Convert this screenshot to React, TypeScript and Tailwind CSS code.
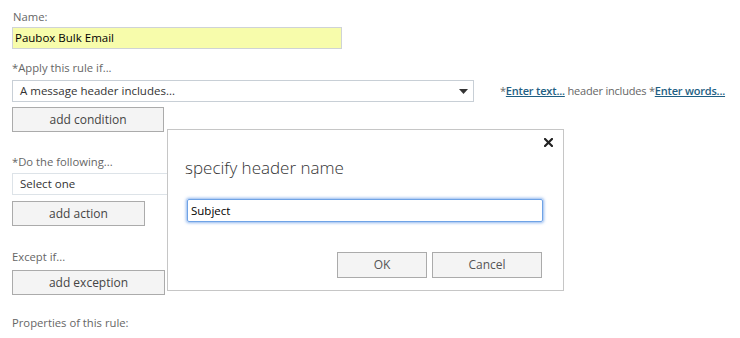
import React from "react";

const font = { fontFamily: '"Open Sans", "Noto Sans", sans-serif' };

const Label: React.FC<{ text: string; className?: string }> = ({ text, className }) => (
  <div className={`text-[11.25px] leading-[16px] text-[#666666] ${className ?? ""}`}>{text}</div>
);

const GrayButton: React.FC<{ label: string; className?: string }> = ({ label, className }) => (
  <button
    className={`h-[25px] shrink-0 border border-[#ababab] bg-[#f4f4f4] text-[12px] leading-none text-[#444444] ${className ?? ""}`}
  >
    {label}
  </button>
);

const Caret = () => (
  <svg width="9" height="5" viewBox="0 0 9 5">
    <path d="M0 0 H9 L4.5 5 Z" fill="#333333" />
  </svg>
);

export default function App() {
  return (
    <div className="relative h-[338px] w-[740px] overflow-hidden bg-white" style={font}>
      <div className="flex flex-col items-start px-[12px] pt-[9px]">
        <Label text="Name:" className="pl-[1px]" />
        <div className="mt-[2px] flex h-[22px] w-[330px] items-center border border-[#cfd3d6] bg-[#f7fcab] pl-[2px] text-[11.5px] text-black">
          Paubox Bulk Email
        </div>

        <Label text="*Apply this rule if..." className="mt-[11px]" />
        <div className="mt-[4px] flex items-center whitespace-nowrap">
          <div className="flex h-[22px] w-[462px] shrink-0 items-center justify-between border border-[#c8cfd6] pl-[7px] pr-[5px] text-[11.5px] text-[#333333]">
            <span>A message header includes...</span>
            <Caret />
          </div>
          <div className="ml-[26px] shrink-0 text-[11px] tracking-[-0.2px] text-[#666666]">
            *<a className="font-semibold text-[#1f5f84] underline">Enter text...</a> header includes *
            <a className="font-semibold text-[#1f5f84] underline">Enter words...</a>
          </div>
        </div>
        <GrayButton label="add condition" className="mt-[5px] w-[152px]" />

        <Label text="*Do the following..." className="mt-[22px]" />
        <div className="mt-[3px] flex h-[22px] w-[462px] items-center border border-[#dde3e8] pl-[7px] text-[11.5px] text-[#333333]">
          Select one
        </div>
        <GrayButton label="add action" className="mt-[6px] w-[133px]" />

        <Label text="Except if..." className="mt-[23px]" />
        <GrayButton label="add exception" className="mt-[5px] w-[153px]" />

        <Label text="Properties of this rule:" className="mt-[20px]" />
      </div>

      {/* dialog */}
      <div className="absolute left-[167px] top-[129px] flex h-[162px] w-[397px] flex-col border border-[#c6c6c6] bg-white">
        <div className="flex justify-end pr-[10px] pt-[8px]">
          <svg width="9" height="9" viewBox="0 0 9 9">
            <path d="M1 1 L8 8 M8 1 L1 8" stroke="#222222" strokeWidth="2.2" strokeLinecap="square" />
          </svg>
        </div>
        <div className="ml-[17px] mt-[10px] text-[17px] font-light leading-[22px] text-[#333333]">
          specify header name
        </div>
        <div className="ml-[19px] mt-[20px] flex h-[23px] w-[356px] items-center rounded-[2px] border border-[#6fa3e6] pl-[3px] text-[11.5px] text-black shadow-[0_0_3px_1px_rgba(95,150,230,0.7)]">
          Subject
        </div>
        <div className="ml-[169px] mt-[30px] flex gap-[5px]">
          <button className="h-[26px] w-[90px] border border-[#ababab] bg-[#f4f4f4] text-[12px] text-[#555555]">OK</button>
          <button className="h-[26px] w-[110px] border border-[#ababab] bg-[#f4f4f4] text-[12px] text-[#555555]">Cancel</button>
        </div>
      </div>
    </div>
  );
}
